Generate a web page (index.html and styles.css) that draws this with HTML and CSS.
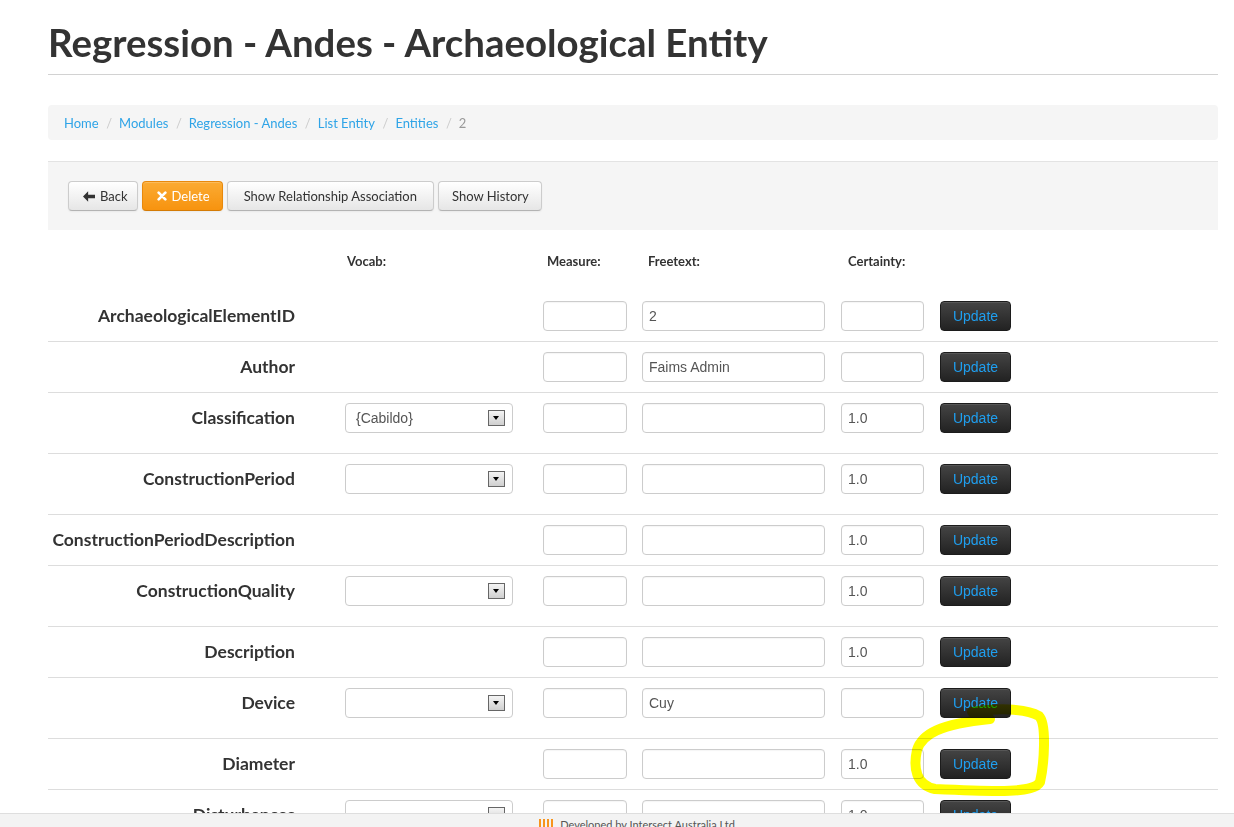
FILE: index.html
```html
<!DOCTYPE html>
<html>
<head>
<meta charset="utf-8">
<title>Regression - Andes - Archaeological Entity</title>
<link rel="stylesheet" href="styles.css">
</head>
<body>
<div class="container">
  <div class="page-header"><h1>Regression - Andes - Archaeological Entity</h1></div>

  <ul class="breadcrumb">
    <li><a href="#">Home</a><span class="divider">/</span></li>
    <li><a href="#">Modules</a><span class="divider">/</span></li>
    <li><a href="#">Regression - Andes</a><span class="divider">/</span></li>
    <li><a href="#">List Entity</a><span class="divider">/</span></li>
    <li><a href="#">Entities</a><span class="divider">/</span></li>
    <li class="active">2</li>
  </ul>

  <div class="actions">
    <button class="btn btn-back"><svg class="ico" viewBox="0 0 14 12" width="12" height="11"><path d="M0 6 L6 0 L6 4 L14 4 L14 8 L6 8 L6 12 Z" fill="#333"/></svg>Back</button>
    <button class="btn btn-warning"><svg class="ico" viewBox="0 0 12 12" width="10" height="10"><path d="M2 2 L10 10 M10 2 L2 10" stroke="#fff" stroke-width="3.2" stroke-linecap="round"/></svg>Delete</button>
    <button class="btn btn-wide">Show Relationship Association</button>
    <button class="btn">Show History</button>
  </div>

  <div class="row head">
    <div class="label"></div>
    <div class="c-vocab hd hd-vocab">Vocab:</div>
    <div class="c-measure hd hd-measure">Measure:</div>
    <div class="c-free hd hd-free">Freetext:</div>
    <div class="c-cert hd hd-cert">Certainty:</div>
  </div>

  <div class="row">
    <div class="label">ArchaeologicalElementID</div>
    <div class="c-vocab"></div>
    <div class="c-measure"><div class="input"></div></div>
    <div class="c-free"><div class="input">2</div></div>
    <div class="c-cert"><div class="input"></div></div>
    <div class="c-upd"><button class="btn-update">Update</button></div>
  </div>

  <div class="row">
    <div class="label">Author</div>
    <div class="c-vocab"></div>
    <div class="c-measure"><div class="input"></div></div>
    <div class="c-free"><div class="input">Faims Admin</div></div>
    <div class="c-cert"><div class="input"></div></div>
    <div class="c-upd"><button class="btn-update">Update</button></div>
  </div>

  <div class="row">
    <div class="label">Classification</div>
    <div class="c-vocab"><div class="select">{Cabildo}<span class="arrow"></span></div></div>
    <div class="c-measure"><div class="input"></div></div>
    <div class="c-free"><div class="input"></div></div>
    <div class="c-cert"><div class="input">1.0</div></div>
    <div class="c-upd"><button class="btn-update">Update</button></div>
  </div>

  <div class="row">
    <div class="label">ConstructionPeriod</div>
    <div class="c-vocab"><div class="select"><span class="arrow"></span></div></div>
    <div class="c-measure"><div class="input"></div></div>
    <div class="c-free"><div class="input"></div></div>
    <div class="c-cert"><div class="input">1.0</div></div>
    <div class="c-upd"><button class="btn-update">Update</button></div>
  </div>

  <div class="row">
    <div class="label">ConstructionPeriodDescription</div>
    <div class="c-vocab"></div>
    <div class="c-measure"><div class="input"></div></div>
    <div class="c-free"><div class="input"></div></div>
    <div class="c-cert"><div class="input">1.0</div></div>
    <div class="c-upd"><button class="btn-update">Update</button></div>
  </div>

  <div class="row">
    <div class="label">ConstructionQuality</div>
    <div class="c-vocab"><div class="select"><span class="arrow"></span></div></div>
    <div class="c-measure"><div class="input"></div></div>
    <div class="c-free"><div class="input"></div></div>
    <div class="c-cert"><div class="input">1.0</div></div>
    <div class="c-upd"><button class="btn-update">Update</button></div>
  </div>

  <div class="row">
    <div class="label">Description</div>
    <div class="c-vocab"></div>
    <div class="c-measure"><div class="input"></div></div>
    <div class="c-free"><div class="input"></div></div>
    <div class="c-cert"><div class="input">1.0</div></div>
    <div class="c-upd"><button class="btn-update">Update</button></div>
  </div>

  <div class="row">
    <div class="label">Device</div>
    <div class="c-vocab"><div class="select"><span class="arrow"></span></div></div>
    <div class="c-measure"><div class="input"></div></div>
    <div class="c-free"><div class="input">Cuy</div></div>
    <div class="c-cert"><div class="input"></div></div>
    <div class="c-upd"><button class="btn-update">Update</button></div>
  </div>

  <div class="row">
    <div class="label">Diameter</div>
    <div class="c-vocab"></div>
    <div class="c-measure"><div class="input"></div></div>
    <div class="c-free"><div class="input"></div></div>
    <div class="c-cert"><div class="input">1.0</div></div>
    <div class="c-upd"><button class="btn-update">Update</button></div>
  </div>

  <div class="row">
    <div class="label">Disturbances</div>
    <div class="c-vocab"><div class="select"><span class="arrow"></span></div></div>
    <div class="c-measure"><div class="input"></div></div>
    <div class="c-free"><div class="input"></div></div>
    <div class="c-cert"><div class="input">1.0</div></div>
    <div class="c-upd"><button class="btn-update">Update</button></div>
  </div>
</div>

<svg class="highlight" width="1234" height="827" viewBox="0 0 1234 827">
  <path d="M972 712 C995 708 1025 708 1039 716 C1047 724 1044 765 1040 782 C1034 793 1000 792 935 789 C916 785 913 768 917 750 C922 734 940 724 990 719" fill="none" stroke="#ffff00" stroke-width="10" stroke-linecap="round" stroke-linejoin="round"/>
</svg>

<footer class="footer">
  <span class="logo"><i></i><i></i><i></i><i></i></span>
  <span class="footer-text">Developed by Intersect Australia Ltd</span>
</footer>
</body>
</html>
```

FILE: styles.css
```css
html, body {
  margin: 0;
  padding: 0;
  background: #fff;
}
body {
  font-family: Lato, "Open Sans", sans-serif;
  color: #333;
  height: 900px;
}
.container {
  width: 1170px;
  margin-left: 48px;
}
.page-header {
  padding-top: 22px;
  padding-bottom: 12px;
  border-bottom: 1px solid #d2d2d2;
}
.page-header h1 {
  margin: 0;
  font-size: 38.4px;
  line-height: 40px;
  font-weight: 700;
  color: #333;
}
.breadcrumb {
  list-style: none;
  margin: 30px 0 0;
  padding: 0 16px;
  height: 35px;
  background: #f5f5f5;
  border-radius: 4px;
  display: flex;
  align-items: center;
  font-size: 13px;
}
.breadcrumb a {
  color: #2fa4e7;
  text-decoration: none;
}
.breadcrumb .divider {
  color: #ccc;
  padding: 0 7px 0 7.5px;
}
.breadcrumb .active {
  color: #999;
}
.actions {
  margin-top: 21px;
  border-top: 1px solid #e3e3e3;
  background: #f5f5f5;
  padding: 19px 20px;
  display: flex;
  gap: 4px;
}
.btn {
  font-family: Lato, "Open Sans", sans-serif;
  font-size: 13px;
  height: 30px;
  padding: 0 12px 0 13px;
  color: #333;
  background: linear-gradient(#ffffff, #e6e6e6);
  border: 1px solid #cccccc;
  border-bottom-color: #b3b3b3;
  border-radius: 4px;
  box-shadow: inset 0 1px 0 rgba(255,255,255,.2), 0 1px 2px rgba(0,0,0,.05);
  display: inline-flex;
  align-items: center;
}
.btn .ico {
  margin-right: 5px;
}
.btn-back {
  padding-left: 14px;
  padding-right: 9px;
}
.btn-wide {
  padding: 0 16px;
}
.btn-warning {
  color: #fff;
  background: linear-gradient(#fbab33, #f7930f);
  border-color: #e8890c;
  border-bottom-color: #d47b05;
  padding-left: 14px;
  padding-right: 12px;
}
.row {
  display: flex;
  align-items: flex-start;
  padding: 10px 0;
  border-bottom: 1px solid #dddddd;
}
.row.head {
  border-bottom: none;
  padding: 20px 0 19px;
  height: 22px;
  align-items: center;
}
.label {
  width: 247px;
  flex: none;
  text-align: right;
  font-weight: 700;
  font-size: 17.5px;
  line-height: 30px;
  color: #333;
}
.hd {
  font-size: 13px;
  font-weight: 700;
  color: #333;
}
.hd-vocab { padding-left: 2px; }
.hd-measure { padding-left: 4px; }
.hd-free { padding-left: 6px; }
.hd-cert { padding-left: 7px; }
.c-vocab { width: 168px; margin-left: 50px; flex: none; }
.c-measure { width: 84px; margin-left: 30px; flex: none; }
.c-free { width: 183px; margin-left: 15px; flex: none; }
.c-cert { width: 83px; margin-left: 16px; flex: none; }
.c-upd { width: 71px; margin-left: 16px; flex: none; }
.head .c-vocab, .head .c-measure, .head .c-free, .head .c-cert { box-sizing: border-box; }
.input {
  box-sizing: border-box;
  height: 30px;
  border: 1px solid #cccccc;
  border-radius: 4px;
  padding: 0 6px;
  font-family: "Liberation Sans", Arial, sans-serif;
  font-size: 14px;
  line-height: 28px;
  color: #555;
  background: #fff;
  box-shadow: inset 0 1px 1px rgba(0,0,0,.04);
}
.select {
  position: relative;
  box-sizing: border-box;
  height: 30px;
  margin-bottom: 10px;
  border: 1px solid #cccccc;
  border-radius: 4px;
  padding: 0 10px;
  font-family: "Liberation Sans", Arial, sans-serif;
  font-size: 14px;
  line-height: 28px;
  color: #555;
  background: #fff;
}
.select .arrow {
  position: absolute;
  right: 7px;
  top: 6px;
  width: 15px;
  height: 14px;
  border: 1px solid #666;
  background: linear-gradient(#f4f4f4, #cfcfcf);
}
.select .arrow::after {
  content: "";
  position: absolute;
  left: 4px;
  top: 5px;
  border-left: 3.5px solid transparent;
  border-right: 3.5px solid transparent;
  border-top: 4px solid #000;
}
.btn-update {
  width: 71px;
  height: 30px;
  padding: 0;
  font-family: "Liberation Sans", Arial, sans-serif;
  font-size: 14px;
  color: #1f9ff0;
  background: linear-gradient(#444444, #222222);
  border: 1px solid #1c1c1c;
  border-radius: 4px;
  box-shadow: inset 0 1px 0 rgba(255,255,255,.1);
}
.highlight {
  position: absolute;
  left: 0;
  top: 0;
  pointer-events: none;
  mix-blend-mode: multiply;
}
.footer {
  position: fixed;
  left: 0;
  right: 0;
  top: 813px;
  height: 40px;
  background: #f3f3f3;
  border-top: 1px solid #dedede;
  display: flex;
  justify-content: center;
  align-items: flex-start;
  padding-left: 40px;
  padding-top: 4px;
  box-sizing: border-box;
  z-index: 10;
}
.logo {
  display: inline-flex;
  gap: 2px;
  margin-right: 7px;
  margin-top: 1px;
}
.logo i {
  display: block;
  width: 2px;
  height: 12px;
  background: #f7941d;
}
.footer-text {
  font-size: 11px;
  color: #555;
  line-height: 14px;
}
```
